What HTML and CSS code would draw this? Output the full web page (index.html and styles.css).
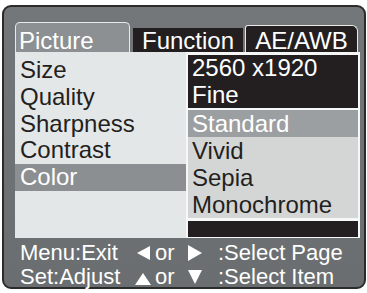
FILE: index.html
```html
<!DOCTYPE html>
<html>
<head>
<meta charset="utf-8">
<link rel="stylesheet" href="styles.css">
</head>
<body>
<div class="frame">
  <div class="tabs">
    <div class="tab tab-picture">Picture</div>
    <div class="tab tab-function">Function</div>
    <div class="tab tab-ae">AE/AWB</div>
  </div>
  <div class="content">
    <div class="left">
      <div class="row">Size</div>
      <div class="row">Quality</div>
      <div class="row">Sharpness</div>
      <div class="row">Contrast</div>
      <div class="row row-sel">Color</div>
    </div>
    <div class="right">
      <div class="values">
        <div class="vrow">2560 x1920</div>
        <div class="vrow">Fine</div>
      </div>
      <div class="options">
        <div class="orow orow-sel">Standard</div>
        <div class="orow">Vivid</div>
        <div class="orow">Sepia</div>
        <div class="orow">Monochrome</div>
      </div>
      <div class="bar"></div>
    </div>
  </div>
  <div class="footer">
    <div class="fline">
      <span class="lbl">Menu:Exit</span>
      <span class="tri"><svg width="13" height="14" viewBox="0 0 13 14"><polygon points="13,0 13,14 0,7" fill="#fff"/></svg></span>
      <span class="or">or</span>
      <span class="tri"><svg width="14" height="16" viewBox="0 0 14 16"><polygon points="0,0 14,8 0,16" fill="#fff"/></svg></span>
      <span class="act">:Select Page</span>
    </div>
    <div class="fline">
      <span class="lbl">Set:Adjust</span>
      <span class="tri tri-up"><svg width="16" height="12" viewBox="0 0 16 12"><polygon points="8,0 16,12 0,12" fill="#fff"/></svg></span>
      <span class="or">or</span>
      <span class="tri"><svg width="14" height="14" viewBox="0 0 14 14"><polygon points="0,0 14,0 7,14" fill="#fff"/></svg></span>
      <span class="act">:Select Item</span>
    </div>
  </div>
</div>
</body>
</html>
```

FILE: styles.css
```css
html, body {
  margin: 0;
  padding: 0;
  background: #ffffff;
}
body {
  font-family: "Liberation Sans", Arial, sans-serif;
  width: 367px;
  height: 293px;
  overflow: hidden;
}
.frame {
  box-sizing: border-box;
  margin: 5px 0 0 2px;
  width: 364px;
  height: 284px;
  border: 2px solid #2b2b2b;
  border-radius: 9px;
  background: linear-gradient(#737779, #6a6e70);
  padding: 15px 4px 0 11px;
}
.tabs {
  display: flex;
  align-items: flex-end;
  height: 30px;
}
.tab {
  box-sizing: border-box;
  color: #ffffff;
  font-size: 24px;
  line-height: 23px;
  display: flex;
  align-items: flex-end;
  white-space: nowrap;
}
.tab-picture {
  width: 115px;
  height: 30px;
  background: #8c9092;
  border: 1.5px solid #e8eaea;
  border-bottom: none;
  border-radius: 5px 5px 0 0;
  padding-left: 3px;
}
.tab-function {
  width: 110px;
  height: 24px;
  margin-left: 3px;
  background: #231f20;
  justify-content: center;
}
.tab-ae {
  width: 113px;
  height: 27px;
  margin-left: 2px;
  background: #231f20;
  border: 1.5px solid #e8eaea;
  border-bottom: none;
  border-radius: 3px 6px 0 0;
  justify-content: center;
}
.content {
  display: flex;
  height: 186px;
}
.left {
  width: 171px;
  background: #e3e7e7;
  padding-top: 5px;
  box-sizing: border-box;
}
.row, .vrow, .orow {
  font-size: 24px;
  line-height: 26.75px;
  height: 26.75px;
  color: #231f20;
  padding-left: 5px;
  white-space: nowrap;
}
.row-sel {
  background: #8b8f91;
  color: #ffffff;
}
.right {
  box-sizing: border-box;
  width: 174px;
  background: #f6f7f7;
  padding: 3px 2px 1px 2px;
  display: flex;
  flex-direction: column;
}
.values {
  background: #231f20;
  height: 53px;
}
.vrow {
  color: #ffffff;
  height: 26.5px;
  line-height: 26.5px;
  padding-left: 4px;
}
.options {
  margin-top: 2px;
  background: #d4d6d6;
  height: 108px;
}
.orow {
  height: 27px;
  line-height: 27px;
  padding-left: 4px;
}
.orow-sel {
  background: #9c9fa1;
  color: #ffffff;
}
.bar {
  margin-top: 3px;
  background: #231f20;
  height: 16px;
}
.footer {
  padding: 3px 0 0 5px;
}
.fline {
  display: grid;
  grid-template-columns: 117px 18px 33px 30px auto;
  align-items: center;
  height: 22.5px;
  color: #ffffff;
  font-size: 22px;
  line-height: 22.5px;
}
.tri {
  display: flex;
  align-items: center;
  height: 22.5px;
  padding-top: 1px;
}
.tri svg {
  display: block;
}
.tri-up {
  margin-left: -2px;
  padding-top: 4px;
}
.act {
  white-space: nowrap;
}
```
